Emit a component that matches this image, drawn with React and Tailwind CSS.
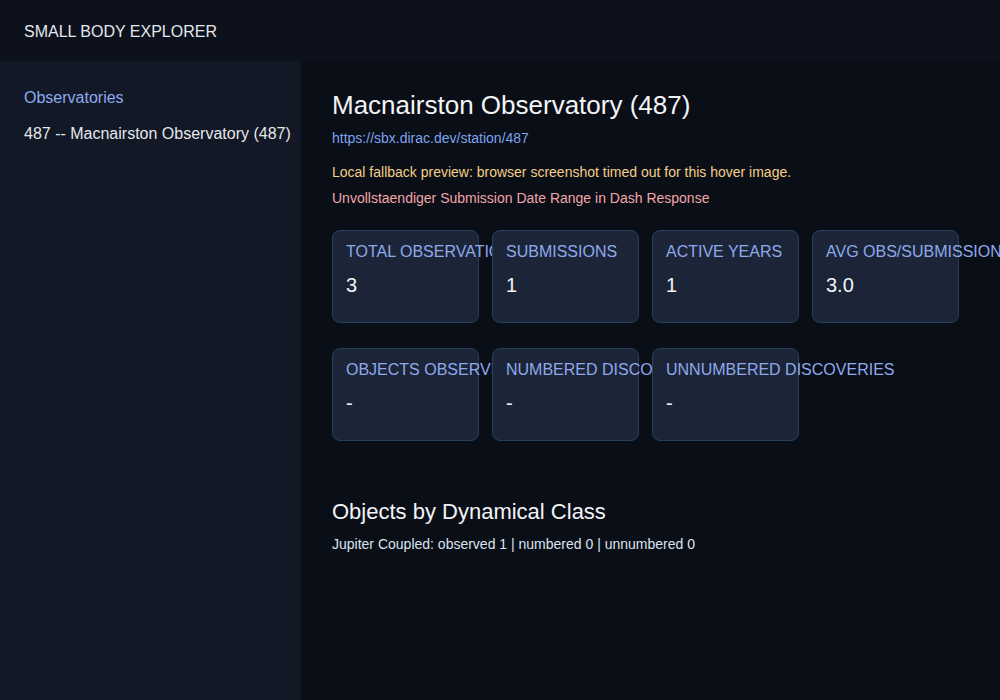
import React from "react";

const rowOne = [
  { label: "TOTAL OBSERVATIONS", value: "3" },
  { label: "SUBMISSIONS", value: "1" },
  { label: "ACTIVE YEARS", value: "1" },
  { label: "AVG OBS/SUBMISSION", value: "3.0" },
];

const rowTwo = [
  { label: "OBJECTS OBSERVED", value: "-" },
  { label: "NUMBERED DISCOVERIES", value: "-" },
  { label: "UNNUMBERED DISCOVERIES", value: "-" },
];

const StatCard = ({ label, value }) => (
  <div className="w-[147px] h-[93px] shrink-0 rounded-lg border border-[#26405f] bg-[#1c2537] px-[13px] pt-[12px]">
    <div className="text-[16px] leading-[18px] text-[#8ea9ec] whitespace-nowrap">{label}</div>
    <div className="mt-[12px] text-[20px] leading-[24px] text-[#f1f5f9]">{value}</div>
  </div>
);

export default function App() {
  return (
    <div
      className="w-[1000px] h-[700px] flex flex-col bg-[#0a0e17] overflow-hidden"
      style={{ fontFamily: '"Liberation Sans", Arial, sans-serif' }}
    >
      <header className="h-[61px] shrink-0 flex items-center px-6 pt-[2px] bg-[#0c111c] text-[16px] text-[#e5e7eb]">
        SMALL BODY EXPLORER
      </header>
      <div className="flex flex-1 min-h-0">
        <aside className="w-[301px] shrink-0 bg-[#121826] pl-6 pt-[25px]">
          <div className="text-[16px] leading-6 text-[#8eaaf0]">Observatories</div>
          <div className="mt-3 text-[16px] leading-6 text-[#e5e7eb] whitespace-nowrap">
            487 -- Macnairston Observatory (487)
          </div>
        </aside>
        <main className="flex-1 pl-[31px] pt-[29px]">
          <h1 className="text-[26px] leading-[30px] text-[#f3f4f6]">Macnairston Observatory (487)</h1>
          <div className="mt-[10px] text-[14px] leading-4 text-[#7ea3ee]">https://sbx.dirac.dev/station/487</div>
          <div className="mt-[18px] text-[14px] leading-4 text-[#f5cf86]">
            Local fallback preview: browser screenshot timed out for this hover image.
          </div>
          <div className="mt-[10px] text-[14px] leading-4 text-[#f3a6a8]">
            Unvollstaendiger Submission Date Range in Dash Response
          </div>
          <div className="mt-6 flex gap-[13px]">
            {rowOne.map((c) => (
              <StatCard key={c.label} {...c} />
            ))}
          </div>
          <div className="mt-[25px] flex gap-[13px]">
            {rowTwo.map((c) => (
              <StatCard key={c.label} {...c} />
            ))}
          </div>
          <h2 className="mt-[58px] text-[22px] leading-[26px] text-[#f3f4f6]">Objects by Dynamical Class</h2>
          <div className="mt-[11px] text-[14px] leading-4 text-[#dce3ee]">
            Jupiter Coupled: observed 1 | numbered 0 | unnumbered 0
          </div>
        </main>
      </div>
    </div>
  );
}
